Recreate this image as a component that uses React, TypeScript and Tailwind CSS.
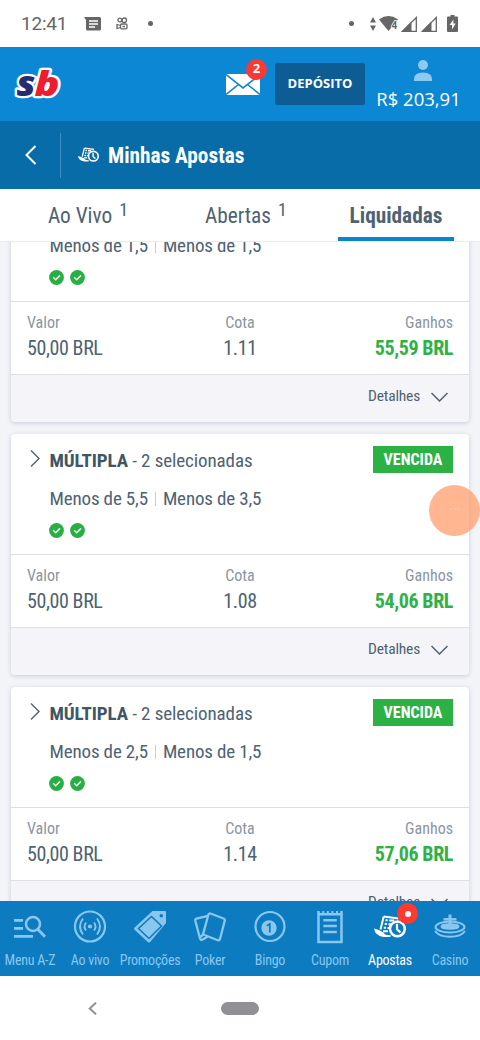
import type { ReactNode } from 'react';
import clsx from 'clsx';

interface Bet {
    picks: [string, string];
    stake: string;
    odds: string;
    winnings: string;
    // title row is already scrolled under the tabs
    titleHidden?: boolean;
}

const bets: Bet[] = [
    { picks: ['Menos de 1,5', 'Menos de 1,5'], stake: '50,00 BRL', odds: '1.11', winnings: '55,59 BRL', titleHidden: true },
    { picks: ['Menos de 5,5', 'Menos de 3,5'], stake: '50,00 BRL', odds: '1.08', winnings: '54,06 BRL' },
    { picks: ['Menos de 2,5', 'Menos de 1,5'], stake: '50,00 BRL', odds: '1.14', winnings: '57,06 BRL' },
];

function StatusBar() {
    return (
        <div className="flex h-[47px] shrink-0 items-center bg-white pl-[21px] pr-[22px] font-['Roboto',sans-serif] text-[#666] [font-stretch:100%]">
            <span className="w-[46px] text-[19px] leading-[24px] tracking-[-0.2px] whitespace-nowrap">12:41</span>
            <svg className="ml-[17px] h-[14px] w-[17px]" viewBox="0 0 17 14" fill="currentColor">
                <path d="M0 0h15.5q1.5 0 1.5 1.5v10.500q0 1.500-1.500 1.500h-12q-1.500 0-1.500-1.500V3z" />
                <path d="M5 4h9M5 7h9M5 10h6" stroke="#fff" strokeWidth="1.3" />
            </svg>
            <svg className="ml-[15px] h-[13px] w-[12px]" viewBox="0 0 12 13" fill="none" stroke="currentColor" strokeWidth="1.3">
                <circle cx="3.800" cy="3" r="1.900" />
                <circle cx="8.300" cy="3.200" r="2.200" />
                <rect x="4.500" y="7" width="6.500" height="4.800" rx="1.300" />
                <path d="M4.500 8.500 1 7.500v4l3.500-1M6.500 9.500h2.500" />
            </svg>
            <span className="ml-[20px] size-[5px] rounded-full bg-current" />
            <span className="ml-auto size-[5px] rounded-full bg-current" />
            <svg className="ml-[16px] h-[14px] w-[6px]" viewBox="0 0 6 14" fill="currentColor">
                <path d="M3 0l3 5.500H0zM3 14l3-5.500H0z" />
            </svg>
            <svg className="ml-[3px] h-[15px] w-[20px]" viewBox="0 0 20 15" fill="currentColor">
                <path d="M0 3.500Q9.500-3.300 19 3.500L9.500 15z" />
                <text x="12.500" y="12.500" fontSize="10" fontWeight="700" stroke="#fff" strokeWidth="1.500" paintOrder="stroke">4</text>
            </svg>
            <Signal className="ml-[2px]" />
            <Signal className="ml-[4px]" />
            <svg className="ml-[10px] h-[17px] w-[11px]" viewBox="0 0 11 17" fill="currentColor">
                <path d="M3.500 0h4v1.500H10q1 0 1 1V16q0 1-1 1H1q-1 0-1-1V2.500q0-1 1-1h2.500z" />
                <path d="M6.500 4.500 2.500 10h2.500v4.500L8.700 8.500H6.300z" fill="#fff" />
            </svg>
        </div>
    );
}

function Signal({ className }: { className?: string }) {
    return (
        <svg className={clsx('h-[16px] w-[16px]', className)} viewBox="0 0 16 16">
            <path d="M15.300 1.500v13.800H1.500z" fill="#fff" stroke="#666" strokeWidth="1.300" />
            <path d="M10.500 5.500V16H0z" fill="#666" />
        </svg>
    );
}

function BetsIcon({ className }: { className?: string }) {
    return (
        <svg className={className} viewBox="0 0 32 24" fill="none" stroke="currentColor" strokeWidth="2">
            <path d="M9.700 1.500 24.500 3.500M9.700 1.500 6.500 14.500" />
            <path d="M11.500 5.200h2.200m1.500.3h5M10.700 9h2.200m1.500.2h2.600M9.800 12.800H12m1.500.2h2M9 16.300h5" strokeWidth="2.100" />
            <path d="M0 13.500Q5 14.500 9.500 17.500q1 3 7 2.500v2H9.500Q1 20.500 0 13.500z" fill="currentColor" stroke="none" />
            <circle cx="23.400" cy="13.800" r="7.400" strokeWidth="2.500" />
            <path d="M23 8.800v5.500l3.500 3.200" strokeWidth="2.200" />
        </svg>
    );
}

function Logo() {
    return (
        <svg className="h-[50px] w-[52px]" viewBox="0 -6 52 50" aria-label="sb">
            <g
                className="font-['Open_Sans',sans-serif] font-extrabold italic [font-stretch:100%]"
                stroke="#fff"
                strokeWidth="4.500"
                strokeLinejoin="round"
                paintOrder="stroke"
            >
                <text x="3.500" y="31" fontSize="35" textLength="19" lengthAdjust="spacingAndGlyphs" fill="#272b72">s</text>
                <text x="21.500" y="31" fontSize="34" textLength="25" lengthAdjust="spacingAndGlyphs" fill="#ee1c2e">b</text>
            </g>
        </svg>
    );
}

function Header() {
    return (
        <header className="flex h-[74px] shrink-0 items-center bg-[#0b87d3] pl-[13px] font-['Open_Sans',sans-serif] text-white [font-stretch:100%]">
            <Logo />
            <div className="relative ml-[161px]">
                <svg className="h-[21px] w-[34px]" viewBox="0 0 34 21">
                    <path d="M0 0h34v21H0z" fill="#fff" />
                    <path d="M0 .5 17 14 34 .5M0 20.500l12.500-10M34 20.500l-12.500-10" fill="none" stroke="#0b87d3" strokeWidth="1.600" />
                </svg>
                <span className="absolute -top-[15px] left-[20px] flex size-[21px] items-center justify-center rounded-full bg-[#f93a34] text-[13px] font-bold">
                    2
                </span>
            </div>
            <button className="ml-[15px] h-[42px] w-[90px] rounded-[2px] bg-[#0d5c93] text-[13px] font-bold">DEPÓSITO</button>
            <div className="ml-[10px] flex w-[87px] flex-col items-center pt-[3px]">
                <svg className="mb-[6px] ml-[8px] h-[21px] w-[18px] text-[#8ecaf0]" viewBox="0 0 18 21" fill="currentColor">
                    <circle cx="9" cy="5" r="5" />
                    <path d="M0 21v-2q0-6.500 9-6.500t9 6.500v2z" />
                </svg>
                <span className="text-[18.500px] leading-[24px] whitespace-nowrap">R$ 203,91</span>
            </div>
        </header>
    );
}

function TitleBar() {
    return (
        <div className="flex h-[68px] shrink-0 items-center bg-[#076ca8] text-white">
            <button className="flex w-[60px] justify-center pl-[2px]">
                <svg className="h-[20px] w-[12px]" viewBox="0 0 12 20" fill="none" stroke="currentColor" strokeWidth="2">
                    <path d="M10.500 1 1.500 10l9 9" />
                </svg>
            </button>
            <span className="h-[45px] w-px bg-[#3a90c4]" />
            <BetsIcon className="ml-[17px] h-[16px] w-[21px]" />
            <h1 className="ml-[9px] pt-[2px] text-[21.3px] font-bold">Minhas Apostas</h1>
        </div>
    );
}

function Tabs() {
    return (
        <nav className="flex h-[53px] shrink-0 border-b border-[#e9ebee] bg-white pr-[26px] pl-[29px] text-[21.3px] leading-[26px] text-[#4e6272]">
            <Tab label="Ao Vivo" count={1} />
            <Tab label="Abertas" count={1} className="ml-[40px]" />
            <div className="ml-auto w-[116px] border-b-4 border-[#0b84cc] pt-[14px] text-center font-bold">Liquidadas</div>
        </nav>
    );
}

function Tab({ label, count, className }: { label: string; count: number; className?: string }) {
    return (
        <div className={clsx('flex w-[118px] justify-center pt-[14px]', className)}>
            {label}
            <span className="-mt-[4px] ml-[7px] text-[18px] leading-[22px]">{count}</span>
        </div>
    );
}

function CheckBadge() {
    return (
        <svg className="size-[15px]" viewBox="0 0 15 15">
            <circle cx="7.500" cy="7.500" r="7.400" fill="#29ae46" />
            <path d="M4.200 7.300 6.700 9.700 11 5.400" fill="none" stroke="#e6f7e6" strokeWidth="1.500" />
        </svg>
    );
}

function BetCard({ bet }: { bet: Bet }) {
    return (
        <article className="flex h-[241px] shrink-0 flex-col overflow-hidden rounded-[4px] bg-white text-[#4e6272] shadow-[0_1px_4px_rgba(60,80,110,0.25)]">
            <div className="h-[121px] border-b border-[#dcdfe4] pt-[12px] pr-[16px] pl-[19px]">
                <div className="flex h-[27px] items-center">
                    {!bet.titleHidden && (
                        <>
                            <svg className="mb-[2px] h-[17px] w-[10px]" viewBox="0 0 10 17" fill="none" stroke="currentColor" strokeWidth="1.400">
                                <path d="M1 .5 9 8.500l-8 8" />
                            </svg>
                            <p className="ml-[9.500px] pt-[2px] text-[19px] leading-[27px] tracking-[-0.1px]">
                                <b className="text-[#3f5668]">MÚLTIPLA</b> - 2 selecionadas
                            </p>
                            <span className="ml-auto flex h-[27px] w-[80px] items-center justify-center bg-[#2bb144] text-[16px] font-bold text-white">
                                VENCIDA
                            </span>
                        </>
                    )}
                </div>
                <div className="mt-[14px] ml-[19.500px] flex items-center text-[19px] leading-[24px] tracking-[-0.15px]">
                    {bet.picks[0]}
                    <span className="mx-[7px] h-[14px] w-px bg-[#c9ced4]" />
                    {bet.picks[1]}
                </div>
                <div className="mt-[12px] ml-[19px] flex gap-[5.500px]">
                    <CheckBadge />
                    <CheckBadge />
                </div>
            </div>
            <div className="grid h-[73px] grid-cols-3 border-b border-[#dcdfe4] px-[16px] pt-[10px]">
                <Stat label="Valor">{bet.stake}</Stat>
                <Stat label="Cota" className="text-center">{bet.odds}</Stat>
                <Stat label="Ganhos" className="text-right" valueClassName="font-bold text-[#2fb148]">{bet.winnings}</Stat>
            </div>
            <div className="flex flex-1 items-center justify-end bg-[#f5f5f9] pr-[21px] pb-[4px] text-[15.500px] tracking-[-0.2px]">
                Detalhes
                <svg className="ml-[11px] h-[10px] w-[17px]" viewBox="0 0 17 10" fill="none" stroke="currentColor" strokeWidth="1.500">
                    <path d="M.5 1l8 8 8-8" />
                </svg>
            </div>
        </article>
    );
}

interface StatProps {
    label: string;
    className?: string;
    valueClassName?: string;
    children: ReactNode;
}

function Stat({ label, className, valueClassName, children }: StatProps) {
    return (
        <div className={className}>
            <p className="text-[16px] leading-[22px] text-[#8b96a2]">{label}</p>
            <p className={clsx('text-[20px] leading-[28px] tracking-[-0.4px]', valueClassName)}>{children}</p>
        </div>
    );
}

const navItems: { label: string; icon: ReactNode; active?: boolean }[] = [
    {
        label: 'Menu A-Z',
        icon: (
            <g fill="none" stroke="currentColor" strokeWidth="2.800">
                <path d="M0 9.300h9M0 17.300h9M0 25.300h19M24 18.500l7 7.300" />
                <circle cx="19" cy="13" r="7" strokeWidth="2.500" />
            </g>
        ),
    },
    {
        label: 'Ao vivo',
        icon: (
            <g fill="none" stroke="currentColor" strokeWidth="2.200">
                <circle cx="16" cy="15.500" r="15" />
                <path d="M12 11.500q-3 4 0 8M20 11.500q3 4 0 8M9 7.500q-6 8 0 16M23 7.500q6 8 0 16" strokeWidth="1.900" />
                <circle cx="16" cy="15.500" r="2.100" fill="currentColor" stroke="none" />
            </g>
        ),
    },
    {
        label: 'Promoções',
        icon: (
            <>
                <path d="M18.500 0H31q1 0 1 1v11L16.200 31q-1.200 1.200-2.400 0L.6 18.800q-1.200-1.200 0-2.400z" fill="currentColor" />
                <path d="M17.500 5.500 27.500 15 15 27.500 4.500 17.500z" fill="none" stroke="#0c7bc0" strokeWidth="1.600" />
                <circle cx="27.300" cy="4.800" r="1.800" fill="#0c7bc0" />
            </>
        ),
    },
    {
        label: 'Poker',
        icon: (
            <g fill="none" stroke="currentColor" strokeWidth="2.300" strokeLinejoin="round">
                <path d="M16.500 2.500 29.500 7.500q1.700.6 1.200 2.400L26 28q-.6 1.700-2.200 1.200L10.500 24q-1.500-.7-1-2.400L14.300 4q.6-2 2.200-1.500z" />
                <path d="M14 4.800 2.500 7.600Q1 8 1.300 9.700L6 27.500q.5 1.700 2.200 1.200l5.300-3M9.700 22.500 6.700 26" />
            </g>
        ),
    },
    {
        label: 'Bingo',
        icon: (
            <>
                <circle cx="16" cy="15.500" r="14.500" fill="none" stroke="currentColor" strokeWidth="2.200" />
                <circle cx="15" cy="17" r="7.700" fill="currentColor" />
                <path d="M12.800 14.800 15.800 13v8.500" fill="none" stroke="#0c7bc0" strokeWidth="1.700" />
            </>
        ),
    },
    {
        label: 'Cupom',
        icon: (
            <g fill="none" stroke="currentColor" strokeWidth="2.500">
                <path d="M4.500 0v31h23V0M4.500 3.200h23" />
                <path d="M9.200 0v3M13.800 0v3M18.400 0v3M23 0v3" strokeWidth="2" />
                <path d="M9.300 9.300h13.500M9.300 15h13.500M9.300 21h13.500" />
            </g>
        ),
    },
    { label: 'Apostas', icon: null, active: true },
    {
        label: 'Casino',
        icon: (
            <g fill="none" stroke="currentColor" strokeWidth="2">
                <ellipse cx="16" cy="16" rx="14.500" ry="5.500" />
                <ellipse cx="16" cy="15.500" rx="8.500" ry="2.200" fill="currentColor" />
                <path d="M1 20q4 5.800 15 5.800T31 20" />
                <path d="M9.500 8.300h13" strokeWidth="2.500" />
                <path d="M16 3.500v12" strokeWidth="3" />
            </g>
        ),
    },
];

function BottomNav() {
    return (
        <nav className="grid h-[75px] shrink-0 grid-cols-8 bg-[#0c7bc0]">
            {navItems.map((item) => (
                <a
                    key={item.label}
                    className={clsx('relative flex flex-col items-center pt-[10px]', item.active ? 'text-white' : 'text-[#8ac7ee]')}
                >
                    {item.icon ? (
                        <svg className="size-[32px] overflow-visible" viewBox="0 0 32 32">{item.icon}</svg>
                    ) : (
                        <BetsIcon className="mt-[4px] mb-[4px] h-[24px] w-[32px]" />
                    )}
                    <span className="mt-[8px] text-[14px] leading-[18px] tracking-[-0.25px] whitespace-nowrap">{item.label}</span>
                    {item.active && (
                        <span className="absolute top-[2px] left-[37px] flex size-[21px] items-center justify-center rounded-full bg-[#fb3a31]">
                            <span className="size-[6px] rounded-full bg-white" />
                        </span>
                    )}
                </a>
            ))}
        </nav>
    );
}

function SystemNav() {
    return (
        <div className="flex h-[64px] shrink-0 items-center bg-white pl-[88px]">
            <svg className="h-[13px] w-[9px]" viewBox="0 0 9 13" fill="none" stroke="#929094" strokeWidth="2">
                <path d="M8 .7 1.700 6.500 8 12.300" />
            </svg>
            <span className="ml-[124px] h-[13px] w-[38px] rounded-full bg-[#929094]" />
        </div>
    );
}

export default function App() {
    return (
        <div className="relative flex h-[1040px] w-[480px] flex-col overflow-hidden bg-[#f3f4f8] font-['Roboto_Condensed','Roboto',sans-serif] [font-stretch:75%]">
            <StatusBar />
            <Header />
            <TitleBar />
            <Tabs />
            <main className="min-h-0 flex-1 overflow-hidden px-[11px]">
                <div className="-mt-[61px] flex flex-col gap-[12px]">
                    {bets.map((bet) => (
                        <BetCard key={bet.winnings} bet={bet} />
                    ))}
                </div>
            </main>
            <BottomNav />
            <SystemNav />
            {/* Floating recorder bubble */}
            <div className="absolute top-[485px] left-[429px] flex size-[51px] items-center justify-center rounded-full bg-[#ff9e6c]/75 text-[11px] text-white/20">
                •••
            </div>
        </div>
    );
}
